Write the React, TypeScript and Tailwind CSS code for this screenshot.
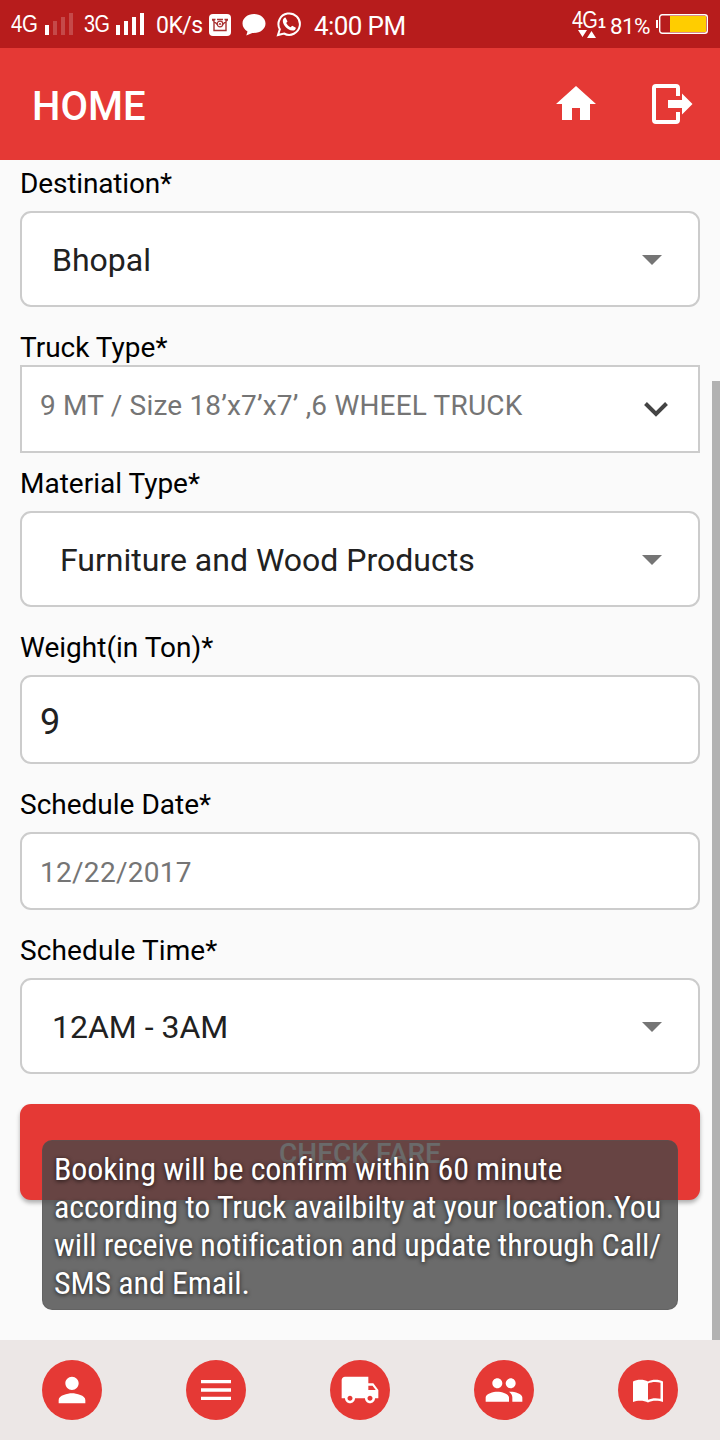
import type { ReactNode } from 'react';
import { MdHome, MdPerson, MdMenu, MdLocalShipping, MdPeople } from 'react-icons/md';

function Bars({ level }: { level: number }) {
  return (
    <svg width="28" height="22" viewBox="0 0 28 22" fill="#fff">
      {[10, 14, 18, 22].map((h, i) => (
        <rect key={h} x={i * 8} y={22 - h} width="4" height={h} opacity={i < level ? 1 : 0.2} />
      ))}
    </svg>
  );
}

function StatusBar() {
  return (
    <div className="flex h-12 items-center bg-[#b71c1c] text-white">
      <span className="ml-[11px] w-[34px] text-[23px] leading-6 tracking-[-0.5px] font-['Liberation_Sans',sans-serif]"><span className="inline-block origin-left scale-x-[0.89]">4G</span></span>
      <Bars level={1} />
      <span className="ml-[11px] w-[32px] text-[23px] leading-6 tracking-[-0.5px] font-['Liberation_Sans',sans-serif]"><span className="inline-block origin-left scale-x-[0.86]">3G</span></span>
      <Bars level={4} />
      <span className="ml-[12px] mt-[3px] w-[53px] whitespace-nowrap text-[23px] leading-6 tracking-[-0.5px]">0K/s</span>
      <svg width="22" height="22" viewBox="0 0 22 22" className="mt-px">
        <rect width="22" height="22" rx="4" fill="#fff" />
        <path d="M3 5.500h3.500M15.500 5.500H19M5 5.500v11h12v-11M3.500 6l5.500 5M18.500 6L13 11M8 5.500h6" fill="none" stroke="#a83232" strokeWidth="1.4" />
        <circle cx="11" cy="10" r="2.8" fill="none" stroke="#a83232" strokeWidth="1.2" />
        <circle cx="11" cy="10" r="1" fill="#a83232" />
      </svg>
      <svg width="24" height="24" viewBox="0 0 24 24" fill="#fff" className="ml-[11px] mt-px">
        <path d="M12 1C5.600 1 .5 5.200 .5 10.500c0 3.300 2 6.200 5 7.900L4.300 22.500 10.300 19.900l1.700.1c6.400 0 11.500-4.200 11.500-9.500S18.400 1 12 1z" />
      </svg>
      <svg width="26" height="26" viewBox="0 0 26 26" className="ml-[10px]">
        <path d="M2 24l1.800-5.700A10.700 10.700 0 1 1 8 22.500z" fill="none" stroke="#fff" strokeWidth="2" />
        <path d="M9.500 6.500l2 4-1.300 1.600c1 2 2.400 3.300 4.400 4.200l1.600-1.600 3.700 2c-.3 2.200-1.700 3-3.500 2.900-4.700-.4-9.500-5.300-9.600-9.500 0-1.700 1-3.500 2.700-3.600z" fill="#fff" />
      </svg>
      <span className="ml-[12px] mt-[3px] whitespace-nowrap text-[26px] leading-8 tracking-[-0.6px]">4:00 PM</span>
      <div className="ml-auto flex h-full items-center">
        <div className="flex h-full w-[38px] flex-col pt-[11px] font-['Liberation_Sans',sans-serif]">
          <div className="flex h-[18px] items-end">
            <span className="w-[26px] text-[23px] leading-[18px] tracking-[-1px]"><span className="inline-block origin-left scale-x-[0.87]">4G</span></span>
            <span className="w-[7px] text-[14px] font-bold leading-[12px]">1</span>
          </div>
          <svg width="18" height="8" viewBox="0 0 18 8" fill="#fff" className="ml-[6px] mt-[1px]">
            <path d="M0 0h9L4.500 7zM9 8h9L13.500 1z" />
          </svg>
        </div>
        <span className="mt-[3px] w-[46px] text-[22.500px] leading-6 tracking-[-0.6px]">81%</span>
        <svg width="52" height="20" viewBox="0 0 52 20" className="mr-[12px]">
          <rect x="0" y="6" width="2" height="8" fill="#fff" />
          <rect x="3.700" y="0.700" width="47.600" height="18.600" rx="2.500" fill="none" stroke="#fff" strokeWidth="1.400" />
          <rect x="14" y="2" width="36" height="16" fill="#ffcd00" />
        </svg>
      </div>
    </div>
  );
}

function Header() {
  return (
    <header className="flex h-28 items-center bg-[#e53935] pl-8 pr-[26px] text-white">
      <h1 className="mt-1.5 text-[40px] font-medium leading-[48px]">HOME</h1>
      <MdHome size={48} className="ml-auto" />
      <svg width="44" height="44" viewBox="0 0 44 44" className="ml-[50px]">
        <path d="M28 14V6a2 2 0 0 0-2-2H6a2 2 0 0 0-2 2v32a2 2 0 0 0 2 2h20a2 2 0 0 0 2-2v-8" fill="none" stroke="#fff" strokeWidth="4" />
        <path d="M18 18h14v-6.500L42.500 22 32 32.500V26H18z" fill="#fff" />
      </svg>
    </header>
  );
}

function Label({ children }: { children: ReactNode }) {
  return <div className="h-8 pt-px text-[28px] leading-8 text-black">{children}</div>;
}

function Select({ value, indent = 'pl-[30px]' }: { value: string; indent?: string }) {
  return (
    <div className={`mt-3 flex h-24 items-center rounded-[11px] border-2 border-[#cccccc] bg-white pr-9 text-[32px] text-[#212121] ${indent}`}>
      <span className="mt-px">{value}</span>
      <svg width="20" height="10" viewBox="0 0 20 10" className="ml-auto mt-px"><path d="M0 0h20L10 10z" fill="#757575" /></svg>
    </div>
  );
}

function Book() {
  return (
    <svg width="40" height="40" viewBox="0 0 40 40">
      <path d="M5 11.500C9 9.300 16 9.300 20 11.500c4-2.200 11-2.200 15 0V32c-4-1.600-11-1.800-15 .5-4-2.300-11-2.100-15-.5z" fill="#fff" />
      <path d="M20 13.500c3.500-1.900 9-2 12.500-.7v16c-4-1-9-.8-12.500 1z" fill="#e53935" />
    </svg>
  );
}

const toastLines = [
  'Booking will be confirm within 60 minute',
  'according to Truck availbilty at your location.You',
  'will receive notification and update through Call/',
  'SMS and Email.',
];

function Toast() {
  return (
    <div className="absolute left-[42px] top-[1140px] h-[169.500px] w-[636px] rounded-[10px] border border-[#555]/40 bg-[#474747]/80 pl-[11px] pt-[9px] text-white [text-shadow:0_1px_4px_rgba(0,0,0,0.75)]">
      {toastLines.map((line) => (
        <div key={line} className="h-[38px] whitespace-nowrap font-['Roboto_Condensed',Roboto,sans-serif] text-[32px] leading-[38px] tracking-[-0.1px] [font-stretch:75%]">
          {line}
        </div>
      ))}
    </div>
  );
}

export default function App() {
  const tabs = [<MdPerson size={40} />, <MdMenu size={40} />, <MdLocalShipping size={40} />, <MdPeople size={40} />, <Book />];
  return (
    <div className="relative flex h-[1440px] w-[720px] flex-col overflow-hidden bg-[#fafafa] font-[Roboto,sans-serif]">
      <StatusBar />
      <Header />
      <div className="flex flex-1">
        <main className="w-[700px] pl-5 pt-[7px]">
          <Label><span className="tracking-[-0.15px]">Destination*</span></Label>
          <Select value="Bhopal" />
          <div className="mt-6"><Label>Truck Type*</Label></div>
          <div className="mt-[2px] flex h-[88px] items-center border-2 border-[#cccccc] bg-white pl-[18px] pr-[30px] text-[28px] text-[#757575]">
            <span className="mb-[7px] whitespace-nowrap tracking-[0.18px]">9 MT / Size 18’x7’x7’ ,6 WHEEL TRUCK</span>
            <svg width="24" height="16" viewBox="0 0 24 16" className="ml-auto mt-[2px]"><path d="M1.500 1.500L12 12 22.500 1.500" fill="none" stroke="#444" strokeWidth="4" /></svg>
          </div>
          <div className="mt-[14px]"><Label>Material Type*</Label></div>
          <Select value="Furniture and Wood Products" indent="pl-[38px]" />
          <div className="mt-6"><Label>Weight(in Ton)*</Label></div>
          <div className="mt-3 flex h-[89px] items-center rounded-[11px] border-2 border-[#cccccc] bg-white pl-[18px] text-[36px] text-[#212121]"><span className="mt-[5px]">9</span></div>
          <div className="mt-6"><Label>Schedule Date*</Label></div>
          <div className="mt-3 flex h-[78px] items-center rounded-[11px] border-2 border-[#cccccc] bg-white pl-[18px] text-[28px] text-[#757575]"><span className="mt-[4px] tracking-[0.28px]">12/22/2017</span></div>
          <div className="mt-6"><Label><span className="tracking-[0.12px]">Schedule Time*</span></Label></div>
          <Select value="12AM - 3AM" />
          <div className="mt-[30px] flex h-24 items-center justify-center rounded-[11px] bg-[#e53935] text-[28px] font-medium shadow-[0_3px_4px_rgba(0,0,0,0.3)]"><span className="mt-[3px] text-[#f3f3f3]">CHECK FARE</span></div>
        </main>
        <div className="ml-3 mt-[221px] w-2 bg-[#b2b2b2]" />
      </div>
      <nav className="flex h-[100px] items-center bg-[#ece7e6]">
        {tabs.map((icon, i) => (
          <div key={i} className="flex flex-1 justify-center">
            <div className="flex h-[60px] w-[60px] items-center justify-center rounded-full bg-[#e53935] text-white">{icon}</div>
          </div>
        ))}
      </nav>
      <Toast />
    </div>
  );
}
